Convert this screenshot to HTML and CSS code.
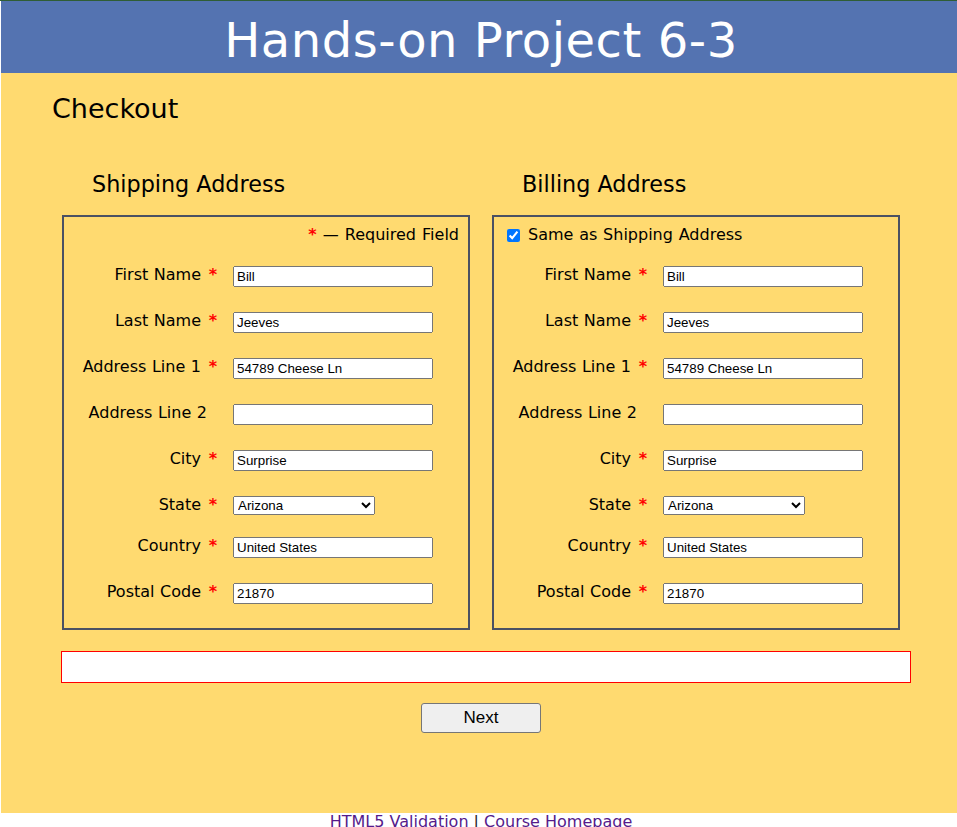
FILE: index.html
```html
<!DOCTYPE html>
<html lang="en">
<head>
<meta charset="utf-8">
<title>Hands-on Project 6-3</title>
<link rel="stylesheet" href="styles.css">
</head>
<body>
<div class="page">
  <header class="banner">
    <h1 class="banner-title">Hands-on Project 6-3</h1>
  </header>
  <main class="content">
    <h2 class="page-title">Checkout</h2>
    <form class="checkout" action="#">
      <div class="columns">
        <section class="column">
          <h3 class="column-title">Shipping Address</h3>
          <fieldset class="box">
            <p class="box-note"><span class="req">*</span> — Required Field</p>
            <div class="fields">
              <div class="field"><label class="field-label" for="sfname">First Name <span class="req">*</span></label><input class="field-input" id="sfname" type="text" value="Bill"></div>
              <div class="field"><label class="field-label" for="slname">Last Name <span class="req">*</span></label><input class="field-input" id="slname" type="text" value="Jeeves"></div>
              <div class="field"><label class="field-label" for="saddr1">Address Line 1 <span class="req">*</span></label><input class="field-input" id="saddr1" type="text" value="54789 Cheese Ln"></div>
              <div class="field"><label class="field-label field-label-plain" for="saddr2">Address Line 2</label><input class="field-input" id="saddr2" type="text" value=""></div>
              <div class="field"><label class="field-label" for="scity">City <span class="req">*</span></label><input class="field-input" id="scity" type="text" value="Surprise"></div>
              <div class="field field-select"><label class="field-label" for="sstate">State <span class="req">*</span></label><select class="field-choice" id="sstate"><option>Arizona</option><option>California</option><option>Nevada</option></select></div>
              <div class="field"><label class="field-label" for="scountry">Country <span class="req">*</span></label><input class="field-input" id="scountry" type="text" value="United States"></div>
              <div class="field"><label class="field-label" for="szip">Postal Code <span class="req">*</span></label><input class="field-input" id="szip" type="text" value="21870"></div>
            </div>
          </fieldset>
        </section>
        <section class="column">
          <h3 class="column-title">Billing Address</h3>
          <fieldset class="box">
            <p class="box-check"><input class="check" id="same" type="checkbox" checked><label for="same">Same as Shipping Address</label></p>
            <div class="fields">
              <div class="field"><label class="field-label" for="bfname">First Name <span class="req">*</span></label><input class="field-input" id="bfname" type="text" value="Bill"></div>
              <div class="field"><label class="field-label" for="blname">Last Name <span class="req">*</span></label><input class="field-input" id="blname" type="text" value="Jeeves"></div>
              <div class="field"><label class="field-label" for="baddr1">Address Line 1 <span class="req">*</span></label><input class="field-input" id="baddr1" type="text" value="54789 Cheese Ln"></div>
              <div class="field"><label class="field-label field-label-plain" for="baddr2">Address Line 2</label><input class="field-input" id="baddr2" type="text" value=""></div>
              <div class="field"><label class="field-label" for="bcity">City <span class="req">*</span></label><input class="field-input" id="bcity" type="text" value="Surprise"></div>
              <div class="field field-select"><label class="field-label" for="bstate">State <span class="req">*</span></label><select class="field-choice" id="bstate"><option>Arizona</option><option>California</option><option>Nevada</option></select></div>
              <div class="field"><label class="field-label" for="bcountry">Country <span class="req">*</span></label><input class="field-input" id="bcountry" type="text" value="United States"></div>
              <div class="field"><label class="field-label" for="bzip">Postal Code <span class="req">*</span></label><input class="field-input" id="bzip" type="text" value="21870"></div>
            </div>
          </fieldset>
        </section>
      </div>
      <div class="errors"></div>
      <div class="actions"><button class="next" type="button">Next</button></div>
    </form>
  </main>
</div>
<footer class="footer">
  <a class="footer-link" href="#">HTML5 Validation</a> | <a class="footer-link" href="#">Course Homepage</a>
</footer>
</body>
</html>
```

FILE: styles.css
```css
html, body {
  margin: 0;
  padding: 0;
}

body {
  background: #ffffff;
  border-top: 1px solid #2f5d35;
  font-family: "DejaVu Sans", Verdana, sans-serif;
  color: #000;
  overflow-x: hidden;
}

.page {
  width: 960px;
  margin-left: 1px;
  background: #ffda70;
}

.banner {
  background: #5473b1;
  height: 72px;
}

.banner-title {
  margin: 0;
  padding-top: 6px;
  line-height: 66px;
  font-size: 48px;
  font-weight: normal;
  letter-spacing: 0.55px;
  color: #ffffff;
  text-align: center;
}

.content {
  padding: 20px 0 80px;
}

.page-title {
  margin: 0 0 0 51px;
  font-size: 27px;
  line-height: 32px;
  font-weight: normal;
}

.columns {
  display: grid;
  grid-template-columns: 408px 408px;
  column-gap: 22px;
  margin: 45px 0 0 61px;
}

.column-title {
  margin: 0 0 18px 30px;
  padding-top: 1px;
  font-size: 22.3px;
  line-height: 26px;
  font-weight: normal;
}

.box {
  margin: 0;
  padding: 8px 0 24px;
  border: 2px solid #4b5163;
  min-width: 0;
}

.box-note {
  margin: 0;
  font-size: 16px;
  line-height: 20px;
  text-align: right;
  padding-right: 9px;
  word-spacing: 1px;
}

.box-check {
  margin: 0;
  display: flex;
  align-items: center;
  font-size: 16px;
  line-height: 20px;
  padding-left: 13px;
  word-spacing: 0.7px;
}

.check {
  margin: 0 8px 0 0;
  width: 13px;
  height: 13px;
}

.req {
  color: #ff0000;
  font-weight: bold;
}

.field-label .req {
  margin-left: 2px;
}

.fields {
  display: flex;
  flex-direction: column;
  gap: 25px;
  margin-top: 21px;
}

.field {
  display: grid;
  grid-template-columns: 153px 200px;
  column-gap: 16px;
  align-items: start;
}

.field-select {
  margin-bottom: -3px;
}

.field-label {
  margin-top: -2px;
  font-size: 16px;
  line-height: 21px;
  text-align: right;
  white-space: nowrap;
  word-spacing: 0.5px;
}

.field-label-plain {
  padding-right: 10px;
}

.field-input {
  width: 200px;
  box-sizing: border-box;
  margin: 0;
  font-family: "Liberation Sans", Arial, sans-serif;
  font-size: 13.33px;
}

.field-choice {
  width: 142px;
  margin: 0;
  font-family: "Liberation Sans", Arial, sans-serif;
  font-size: 13.33px;
}

.errors {
  margin: 21px 0 0 60px;
  width: 850px;
  height: 32px;
  box-sizing: border-box;
  background: #ffffff;
  border: 1px solid #ff0000;
}

.actions {
  display: flex;
  justify-content: center;
  margin-top: 20px;
}

.next {
  width: 120px;
  height: 30px;
  font-family: "Liberation Sans", Arial, sans-serif;
  font-size: 17px;
  color: #000;
  background: #efefef;
  border: 1px solid #767676;
  border-radius: 3px;
}

.footer {
  text-align: center;
  font-size: 16px;
  line-height: 17px;
  width: 962px;
  color: #222;
}

.footer-link {
  color: #551a8b;
  text-decoration: none;
}
```
